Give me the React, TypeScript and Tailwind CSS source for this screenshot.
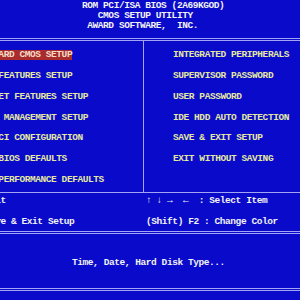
import React from "react";

const font = "font-['Liberation_Mono','DejaVu_Sans_Mono',monospace] font-bold text-[9.5px] tracking-[-0.43px]";

function DoubleLine() {
  return (
    <div className="flex flex-col gap-[1px]">
      <div className="h-[1px] bg-[#a4a4f4]" />
      <div className="h-[1px] bg-[#a4a4f4]" />
    </div>
  );
}

const leftItems = [
  "STANDARD CMOS SETUP",
  "BIOS FEATURES SETUP",
  "CHIPSET FEATURES SETUP",
  "POWER MANAGEMENT SETUP",
  "PNP/PCI CONFIGURATION",
  "LOAD BIOS DEFAULTS",
  "LOAD PERFORMANCE DEFAULTS",
];

const rightItems = [
  "INTEGRATED PERIPHERALS",
  "SUPERVISOR PASSWORD",
  "USER PASSWORD",
  "IDE HDD AUTO DETECTION",
  "SAVE & EXIT SETUP",
  "EXIT WITHOUT SAVING",
];

export default function App() {
  return (
    <div className={`w-[300px] h-[300px] overflow-hidden bg-[#0a0acb] ${font} whitespace-pre`}>
      {/* Header */}
      <div className="h-[38px] pt-[1px] pl-[82px] leading-[10px] text-[#f2f2f2]">
        <div>ROM PCI/ISA BIOS (2A69KGOD)</div>
        <div>{"   CMOS SETUP UTILITY"}</div>
        <div>{" AWARD SOFTWARE,  INC."}</div>
      </div>
      <DoubleLine />

      {/* Menu */}
      <div className="flex h-[151px]">
        <div className="w-[143px] shrink-0 overflow-hidden pt-[4px]">
          {leftItems.map((t, i) => (
            <div key={t} className="h-[20.75px] flex items-center ml-[-28px]">
              <span
                className={
                  i === 0
                    ? "h-[10px] leading-[10px] bg-[#a82c2c] text-[#f6dcc8]"
                    : "h-[10px] leading-[10px] text-[#e4e8a0]"
                }
              >
                {t}
              </span>
            </div>
          ))}
        </div>
        <div className="w-[1px] shrink-0 bg-[#a4a4f4]" />
        <div className="flex-1 pt-[4px] pl-[29px]">
          {rightItems.map((t) => (
            <div key={t} className="h-[20.75px] flex items-center">
              <span className="h-[10px] leading-[10px] text-[#e4e8a0]">{t}</span>
            </div>
          ))}
        </div>
      </div>
      <div className="h-[1px] bg-[#a4a4f4]" />

      {/* Keys */}
      <div className="flex flex-col gap-[10px] pt-[2px] pb-[4px] text-[#f2f2f2] overflow-hidden">
        <div className="flex h-[11px] leading-[11px]">
          <div className="w-[193px] shrink-0 ml-[-47px]">Esc : Quit</div>
          <div>{"↑ ↓ →  ←  : Select Item"}</div>
        </div>
        <div className="flex h-[11px] leading-[11px]">
          <div className="w-[193px] shrink-0 ml-[-47px]">F10 : Save & Exit Setup</div>
          <div>(Shift) F2 : Change Color</div>
        </div>
      </div>
      <DoubleLine />

      {/* Description */}
      <div className="h-[54px] pt-[24px] pl-[72px] leading-[10px] text-[#f2f2f2]">
        Time, Date, Hard Disk Type...
      </div>
      <DoubleLine />
    </div>
  );
}
